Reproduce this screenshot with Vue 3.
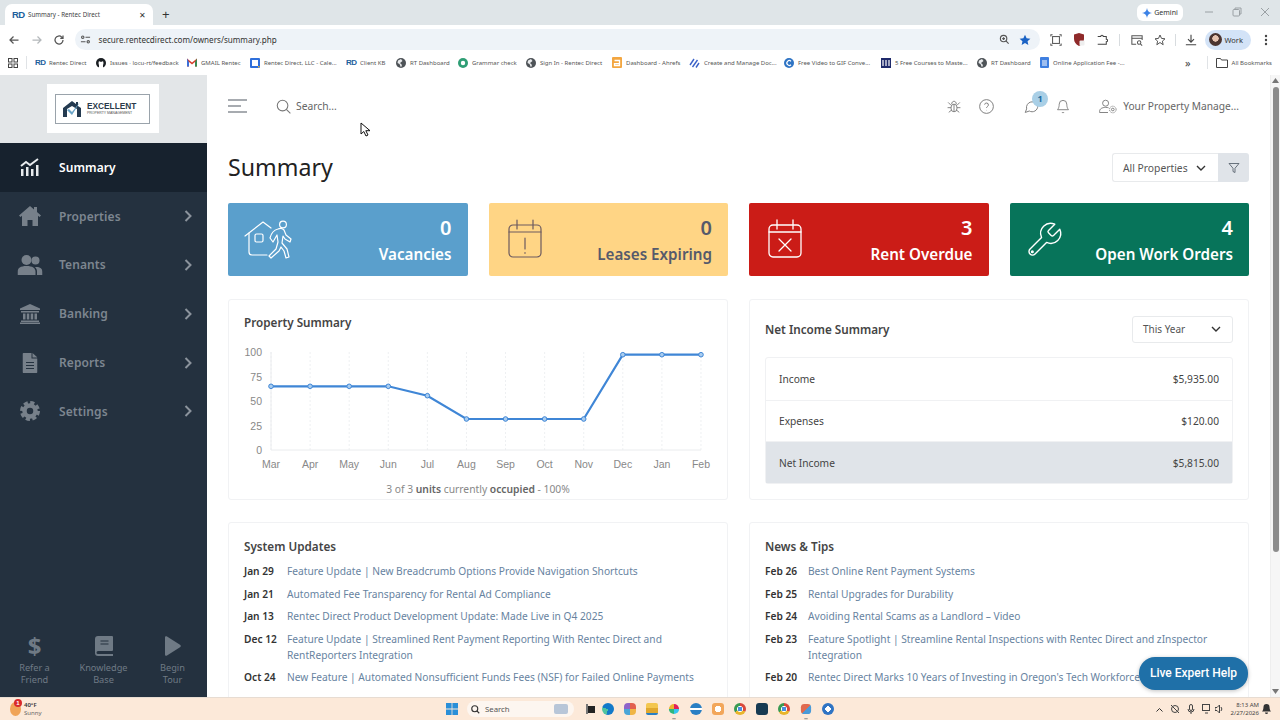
<script setup>
const bookmarks = [
  { t: 'Rentec Direct', w: 61, ic: 'rd' },
  { t: 'Issues · locu-rt/feedback', w: 91, ic: 'gh' },
  { t: 'GMAIL Rentec', w: 63, ic: 'gm' },
  { t: 'Rentec Direct, LLC - Cale...', w: 96, ic: 'cal' },
  { t: 'Client KB', w: 50, ic: 'rd' },
  { t: 'RT Dashboard', w: 62, ic: 'globe' },
  { t: 'Grammar check', w: 68, ic: 'gram' },
  { t: 'Sign In - Rentec Direct', w: 86, ic: 'globe' },
  { t: 'Dashboard - Ahrefs', w: 77, ic: 'ah' },
  { t: 'Create and Manage Doc...', w: 95, ic: 'cr' },
  { t: 'Free Video to GIF Conve...', w: 97, ic: 'gif' },
  { t: '5 Free Courses to Maste...', w: 96, ic: 'five' },
  { t: 'RT Dashboard', w: 63, ic: 'globe' },
  { t: 'Online Application Fee -...', w: 90, ic: 'doc' },
]

const nav = [
  { t: 'Properties', ic: 'home' },
  { t: 'Tenants', ic: 'users' },
  { t: 'Banking', ic: 'bank' },
  { t: 'Reports', ic: 'file' },
  { t: 'Settings', ic: 'cog' },
]

const months = ['Mar','Apr','May','Jun','Jul','Aug','Sep','Oct','Nov','Dec','Jan','Feb']
const vals = [42.3,42.3,42.3,42.3,51.7,75,75,75,75,10.7,10.7,10.7]
const pts = months.map((m, i) => ({ m, x: 27 + i * 39.09, y: vals[i] }))
const line = pts.map(p => p.x + ',' + p.y).join(' ')
const yLabels = [{ t: '100', y: 8 }, { t: '75', y: 32.5 }, { t: '50', y: 57 }, { t: '25', y: 81.5 }, { t: '0', y: 106 }]

const updates = [
  { d: 'Jan 29', t: 'Feature Update | New Breadcrumb Options Provide Navigation Shortcuts' },
  { d: 'Jan 21', t: 'Automated Fee Transparency for Rental Ad Compliance' },
  { d: 'Jan 13', t: 'Rentec Direct Product Development Update: Made Live in Q4 2025' },
  { d: 'Dec 12', t: 'Feature Update | Streamlined Rent Payment Reporting With Rentec Direct and RentReporters Integration' },
  { d: 'Oct 24', t: 'New Feature | Automated Nonsufficient Funds Fees (NSF) for Failed Online Payments' },
]
const news = [
  { d: 'Feb 26', t: 'Best Online Rent Payment Systems' },
  { d: 'Feb 25', t: 'Rental Upgrades for Durability' },
  { d: 'Feb 24', t: 'Avoiding Rental Scams as a Landlord – Video' },
  { d: 'Feb 23', t: 'Feature Spotlight | Streamline Rental Inspections with Rentec Direct and zInspector Integration' },
  { d: 'Feb 20', t: "Rentec Direct Marks 10 Years of Investing in Oregon's Tech Workforce" },
]
</script>

<template>
  <div class="screen">
    <!-- browser tabs -->
    <div class="tabstrip">
      <div class="tab">
        <span class="rd tabfav">RD</span>
        <span class="tabtitle">Summary - Rentec Direct</span>
        <span class="tabx">✕</span>
      </div>
      <span class="newtab">+</span>
      <div class="spacer"></div>
      <div class="gemini">
        <svg width="10" height="10" viewBox="0 0 10 10"><path d="M5 0C5.4 3 7 4.600 10 5 7 5.400 5.400 7 5 10 4.600 7 3 5.400 0 5 3 4.600 4.600 3 5 0Z" fill="#3c82e6"/></svg>
        <span>Gemini</span>
      </div>
      <div class="winctl">
        <svg width="10" height="10" viewBox="0 0 10 10" fill="none" stroke="#9aa0a4"><path d="M1 5h8"/></svg>
        <svg width="10" height="10" viewBox="0 0 10 10" fill="none" stroke="#9aa0a4"><rect x="1" y="2.500" width="6.500" height="6.500" rx="1"/><path d="M3 2.500V1h6v6H7.500"/></svg>
        <svg width="10" height="10" viewBox="0 0 10 10" fill="none" stroke="#9aa0a4"><path d="M1 1l8 8M9 1l-8 8"/></svg>
      </div>
    </div>

    <!-- address bar -->
    <div class="toolbar">
      <svg class="tb" width="12" height="12" viewBox="0 0 24 24" fill="none" stroke="#555" stroke-width="2.500"><path d="M21 12H4M11 5l-7 7 7 7"/></svg>
      <svg class="tb" width="12" height="12" viewBox="0 0 24 24" fill="none" stroke="#b4b8bb" stroke-width="2.500"><path d="M3 12h17M13 5l7 7-7 7"/></svg>
      <svg class="tb" width="12" height="12" viewBox="0 0 24 24" fill="none" stroke="#555" stroke-width="2.500"><path d="M20 12a8 8 0 1 1-2.500-5.800L20 8.500M20 3v5.500h-5.500"/></svg>
      <div class="omni">
        <svg width="11" height="11" viewBox="0 0 12 12" fill="none" stroke="#555" stroke-width="1.200"><circle cx="3" cy="3.500" r="1.300"/><path d="M6 3.500h5M1 8.500h5"/><circle cx="9" cy="8.500" r="1.300"/></svg>
        <span class="url">secure.rentecdirect.com/owners/summary.php</span>
        <div class="spacer"></div>
        <svg width="11" height="11" viewBox="0 0 24 24" fill="none" stroke="#555" stroke-width="2.500"><circle cx="10" cy="10" r="7"/><path d="M21 21l-6-6M7 10h6M10 7v6"/></svg>
        <svg width="12" height="12" viewBox="0 0 24 24" fill="#1a62c4"><path d="M12 1.500l3.200 7 7.600.800-5.700 5.100 1.600 7.500L12 18l-6.700 3.900 1.600-7.500L1.200 9.300l7.600-.8z"/></svg>
      </div>
      <div class="tbright">
        <svg width="12" height="12" viewBox="0 0 14 14" fill="none" stroke="#555" stroke-width="1.200"><path d="M1 3V1h2M11 1h2v2M13 11v2h-2M3 13H1v-2"/><rect x="3" y="3" width="8" height="8"/></svg>
        <svg width="12" height="13" viewBox="0 0 12 13"><path d="M1 1.500 6 0l5 1.500V6c0 3-2 5.500-5 7-3-1.500-5-4-5-7z" fill="#8f2a2a"/><rect x="6.500" y="7.500" width="5" height="5" rx="1" fill="#eee"/></svg>
        <svg width="12" height="12" viewBox="0 0 14 14" fill="none" stroke="#444" stroke-width="1.200"><path d="M2 3h3.500a1.500 1.500 0 0 1 3 0H12v3a1.500 1.500 0 0 1 0 3v3H2"/></svg>
        <i class="tdiv"></i>
        <svg width="12" height="12" viewBox="0 0 14 14" fill="none" stroke="#555" stroke-width="1.200"><path d="M6 12H1V2h12v5"/><path d="M1 5h12"/><circle cx="9.500" cy="10" r="2"/><path d="M11 11.500l2 2"/></svg>
        <svg width="12" height="12" viewBox="0 0 24 24" fill="none" stroke="#555" stroke-width="2"><path d="M12 2l3 6.800 7 .8-5.200 4.700 1.500 7.200L12 17l-6.300 4.500 1.500-7.200L2 9.600l7-.8z"/></svg>
        <i class="tdiv tight"></i>
        <svg width="12" height="12" viewBox="0 0 14 14" fill="none" stroke="#444" stroke-width="1.300"><path d="M7 1v8M3.500 6 7 9.500 10.500 6M1 12.500h12"/></svg>
        <div class="work">
          <span class="avatar"></span>
          <span>Work</span>
        </div>
        <svg width="4" height="12" viewBox="0 0 4 12" fill="#444"><circle cx="2" cy="2" r="1.200"/><circle cx="2" cy="6" r="1.200"/><circle cx="2" cy="10" r="1.200"/></svg>
      </div>
    </div>

    <!-- bookmarks -->
    <div class="bmbar">
      <svg class="apps" width="10" height="10" viewBox="0 0 10 10" fill="none" stroke="#444"><rect x=".5" y=".5" width="3.500" height="3.500"/><rect x="6" y=".5" width="3.500" height="3.500"/><rect x=".5" y="6" width="3.500" height="3.500"/><rect x="6" y="6" width="3.500" height="3.500"/></svg>
      <i class="bmdiv"></i>
      <div v-for="b in bookmarks" :key="b.t + b.w" class="bm" :style="{ width: b.w + 'px' }">
        <span v-if="b.ic === 'rd'" class="rd">RD</span>
        <svg v-else-if="b.ic === 'gh'" width="10" height="10" viewBox="0 0 10 10"><circle cx="5" cy="5" r="5" fill="#1b1f23"/><path d="M3 10V7.500L2.500 5 3 3l1 .7h2L7 3l.5 2L7 7.500V10z" fill="#fff"/></svg>
        <svg v-else-if="b.ic === 'gm'" width="10" height="9" viewBox="0 0 10 8"><path d="M0 8V0l5 4 5-4v8H8V3.500L5 6 2 3.500V8z" fill="#d6402f"/><path d="M8 8V3.500L10 0v8z" fill="#3a8a52"/><path d="M0 8V0l2 3.500V8z" fill="#3a6fd8"/></svg>
        <svg v-else-if="b.ic === 'cal'" width="10" height="10" viewBox="0 0 10 10"><rect width="10" height="10" rx="1" fill="#2f6fdb"/><rect x="2" y="2" width="6" height="6" fill="#fff"/><path d="M8 8h2l-2 2z" fill="#e9b52c"/></svg>
        <svg v-else-if="b.ic === 'globe'" width="10" height="10" viewBox="0 0 10 10"><circle cx="5" cy="5" r="5" fill="#4e5357"/><path d="M2 2.500 5 1l1.500 2L4 5l2 2-1 2.500L3.500 6 1.500 5z" fill="#e8eaec"/></svg>
        <svg v-else-if="b.ic === 'gram'" width="10" height="10" viewBox="0 0 10 10"><circle cx="5" cy="5" r="5" fill="#2f9e75"/><circle cx="5" cy="5" r="2.200" fill="#fff"/></svg>
        <svg v-else-if="b.ic === 'ah'" width="10" height="11" viewBox="0 0 10 11"><rect width="10" height="11" rx="1" fill="#f3a640"/><path d="M2.500 3.500h5v5h-5v-1.800h5" fill="none" stroke="#fff" stroke-width="1.300"/></svg>
        <svg v-else-if="b.ic === 'cr'" width="11" height="10" viewBox="0 0 11 10" fill="none" stroke="#3b62c9" stroke-width="1.400"><path d="M1 7 5 1M3.500 9 8.500 2M7 9.500 10 5"/></svg>
        <svg v-else-if="b.ic === 'gif'" width="10" height="10" viewBox="0 0 10 10"><circle cx="5" cy="5" r="5" fill="#2f74c4"/><path d="M7 3.300A2.400 2.400 0 1 0 7 6.700" fill="none" stroke="#fff" stroke-width="1.200"/></svg>
        <svg v-else-if="b.ic === 'five'" width="10" height="10" viewBox="0 0 10 10"><rect width="10" height="10" fill="#1f2a6b"/><path d="M2 2v6M5 2v6M8 2v6" stroke="#fff" stroke-width="1.200"/></svg>
        <svg v-else width="9" height="11" viewBox="0 0 9 11"><rect width="9" height="11" rx="1" fill="#3f7fe0"/><path d="M2 4h5M2 6h5M2 8h5" stroke="#fff"/></svg>
        <span class="bmtext">{{ b.t }}</span>
      </div>
      <div class="spacer"></div>
      <span class="more">»</span>
      <i class="bmdiv"></i>
      <svg width="12" height="10" viewBox="0 0 12 10" fill="none" stroke="#444"><path d="M.5 9.500V.5h4l1 1.500h6v7.500z"/></svg>
      <span class="bmtext allbm">All Bookmarks</span>
    </div>

    <!-- the page -->
    <div class="app">
      <aside class="side">
        <div class="logozone">
          <div class="logobox">
            <div class="logoframe">
              <svg width="21" height="17" viewBox="0 0 21 17"><path d="M0 8 9 1l4 3V2h2v4l3 2v9h-4V9L9 6 4 9v8H0z" fill="#243a50"/><path d="M6 9l3 3 8-10-8 13-5-5z" fill="#6aa5c8"/></svg>
              <div class="logotxt">
                <b>EXCELLENT</b>
                <span>PROPERTY MANAGEMENT</span>
              </div>
            </div>
          </div>
        </div>
        <div class="navitem active">
          <svg class="navic" width="20" height="20" viewBox="0 0 20 20"><path d="M1 9l5-4 4 3 8-6" fill="none" stroke="#e8ebee" stroke-width="2"/><path d="M1 12h2.500v7H1zM6 10h2.500v9H6zM11 12h2.500v7H11zM16 8h2.500v11H16z" fill="#e8ebee"/></svg>
          <span>Summary</span>
        </div>
        <div v-for="n in nav" :key="n.t" class="navitem">
          <svg v-if="n.ic === 'home'" class="navic" width="22" height="20" viewBox="0 0 22 20" fill="#77808a"><path d="M11 0 0 9.500l1.500 1.500L3 9.800V20h5.500v-6h5v6H19V9.800l1.500 1.200L22 9.500l-4-3.400V1h-3v2.500z"/></svg>
          <svg v-else-if="n.ic === 'users'" class="navic" width="25" height="20" viewBox="0 0 25 20" fill="#77808a"><circle cx="9" cy="5" r="5"/><circle cx="18" cy="5.500" r="4"/><path d="M0 20v-3c0-4 3-6 9-6s9 2 9 6v3z"/><path d="M19.500 20v-3.500c0-2-.8-3.500-2.300-4.500 5-.5 7.800 1.500 7.800 5v3z"/></svg>
          <svg v-else-if="n.ic === 'bank'" class="navic" width="20" height="20" viewBox="0 0 20 20" fill="#77808a"><path d="M10 0 0 4.500V6h20V4.500z"/><path d="M1 7h18v1.500H1zM3 9.500h2.500v6H3zM6.800 9.500h2.500v6H6.800zM10.700 9.500h2.500v6h-2.500zM14.500 9.500H17v6h-2.500zM1 16.500h18V18H1zM0 18.500h20V20H0z"/></svg>
          <svg v-else-if="n.ic === 'file'" class="navic" width="15" height="20" viewBox="0 0 15 20" fill="#77808a"><path d="M1 0h8v5.500h6V19a1 1 0 0 1-1 1H1a1 1 0 0 1-1-1V1a1 1 0 0 1 1-1zM10 0l5 4.500h-5z"/><path d="M3.500 9.500h8M3.500 12.500h8M3.500 15.500h8" stroke="#24313f" stroke-width="1"/></svg>
          <svg v-else class="navic" width="20" height="20" viewBox="0 0 20 20" fill="none" stroke="#77808a"><circle cx="10" cy="10" r="5.500" stroke-width="4.500"/><circle cx="10" cy="10" r="8.500" stroke-width="3" stroke-dasharray="4.200 2.470"/></svg>
          <span>{{ n.t }}</span>
          <svg class="navchev" width="8" height="12" viewBox="0 0 8 12" fill="none" stroke="#8b939c" stroke-width="2"><path d="M1.500 1l5 5-5 5"/></svg>
        </div>
        <div class="spacer"></div>
        <div class="sidefoot">
          <div class="footcell">
            <span class="dollar">$</span>
            <span>Refer a<br>Friend</span>
          </div>
          <div class="footcell">
            <svg width="18" height="20" viewBox="0 0 18 20" fill="#6f7a85"><path d="M3 0h14a1 1 0 0 1 1 1v13a1 1 0 0 1-1 1H3a1.500 1.500 0 0 0 0 3h15v2H3a3 3 0 0 1-3-3V3a3 3 0 0 1 3-3z"/><path d="M5.500 5h8M5.500 8h8" stroke="#24313f" stroke-width="1.200"/></svg>
            <span>Knowledge<br>Base</span>
          </div>
          <div class="footcell">
            <svg width="16" height="20" viewBox="0 0 16 20" fill="#6f7a85"><path d="M0 1.500C0 .3 1 0 2 .5l13 8.200c1 .6 1 2 0 2.600L2 19.500c-1 .5-2 .2-2-1z"/></svg>
            <span>Begin<br>Tour</span>
          </div>
        </div>
      </aside>

      <main class="main">
        <header class="head">
          <svg class="burger" width="19" height="14" viewBox="0 0 19 14" stroke="#8b9096" stroke-width="1.400"><path d="M0 1h19M0 7h13M0 13h19"/></svg>
          <svg class="mag" width="15" height="15" viewBox="0 0 24 24" fill="none" stroke="#777" stroke-width="1.700"><circle cx="10.500" cy="10.500" r="8.500"/><path d="m23 23-6.500-6.500"/></svg>
          <span class="searchtxt">Search...</span>
          <div class="spacer"></div>
          <svg class="hic bug" width="14" height="15" viewBox="0 0 24 24" fill="none" stroke="#777" stroke-width="1.500"><path d="M8 8c0-3 1.800-5 4-5s4 2 4 5"/><rect x="7" y="8" width="10" height="13" rx="5"/><path d="M12 8v13M2 5l5 5M22 5l-5 5M1 14h6M23 14h-6M3 22l5-4M21 22l-5-4"/></svg>
          <svg class="hic help" width="15" height="15" viewBox="0 0 24 24" fill="none" stroke="#777" stroke-width="1.500"><circle cx="12" cy="12" r="11"/><path d="M9 9a3 3 0 0 1 6 .8c0 2-3 2.500-3 4.500M12 17.500v.5"/></svg>
          <div class="bubble">
            <svg width="15" height="15" viewBox="0 0 24 24" fill="none" stroke="#777" stroke-width="1.500"><path d="M22 11.500a9 9 0 0 1-13.500 7.700L2 21.500l2.200-5.700A9 9 0 1 1 22 11.500z"/></svg>
            <span class="badge">1</span>
          </div>
          <svg class="hic bell" width="14" height="15" viewBox="0 0 24 24" fill="none" stroke="#777" stroke-width="1.500"><path d="M18.500 8a6.500 6.500 0 0 0-13 0c0 7-3 9.500-3 9.500h19s-3-2.500-3-9.500"/><path d="M14 21.500a2.300 2.300 0 0 1-4 0"/></svg>
          <svg class="hic usr" width="18" height="15" viewBox="0 0 30 24" fill="none" stroke="#777" stroke-width="1.500"><circle cx="11" cy="6.500" r="5"/><path d="M1 22v-2c0-4 4-6.500 10-6.500 2 0 3.500.2 5 .7M1 22h14"/><circle cx="23" cy="17" r="2.200"/><circle cx="23" cy="17" r="5.500" stroke-dasharray="2 1.500"/></svg>
          <span class="mgr">Your Property Manage...</span>
        </header>

        <div class="content">
          <div class="titlerow">
            <h1>Summary</h1>
            <div class="propsel">
              <div class="propbox">
                <span>All Properties</span>
                <svg width="10" height="10" viewBox="0 0 10 10" fill="none" stroke="#333" stroke-width="1.400"><path d="M1 3l4 4 4-4"/></svg>
              </div>
              <div class="filterbtn">
                <svg width="12" height="12" viewBox="0 0 24 24" fill="none" stroke="#5b6570" stroke-width="1.800"><path d="M22 3H2l8 9.500V19l4 2v-8.500z"/></svg>
              </div>
            </div>
          </div>

          <div class="cards">
            <div class="card blue">
              <svg class="cardic" width="48" height="40" viewBox="0 0 48 40" fill="none" stroke="#fff" stroke-width="1.200" stroke-linecap="round" stroke-linejoin="round">
                <path d="M1 16 19 2l8 6"/>
                <path d="M5 13v19a3 3 0 0 0 3 3h15"/>
                <rect x="11" y="14" width="8" height="8" rx="1.500"/>
                <circle cx="39" cy="4.500" r="3.400"/>
                <path d="M34 9C30 10 27 14 26 18L29 22 33 15 34 22 32 29 25 36 27 38 35 31 37 27 40 31 42 38 45 37 43 29 38 23 39 16 41 19 46 22 47 19 42 15 40 10C38 8 36 8 34 9Z"/>
              </svg>
              <div class="cardtxt"><b>0</b><span>Vacancies</span></div>
            </div>
            <div class="card yellow">
              <svg class="cardic cal" width="34" height="40" viewBox="0 0 34 40" fill="none" stroke="#6d5b60" stroke-width="1.200" stroke-linecap="round">
                <rect x="1" y="6" width="32" height="32" rx="4"/>
                <path d="M1 13h32M9 1v9M25 1v9M17 19v11M17 33.500v.8"/>
              </svg>
              <div class="cardtxt"><b>0</b><span>Leases Expiring</span></div>
            </div>
            <div class="card red">
              <svg class="cardic cal" width="34" height="40" viewBox="0 0 34 40" fill="none" stroke="#fff" stroke-width="1.300" stroke-linecap="round">
                <rect x="1" y="6" width="32" height="32" rx="4"/>
                <path d="M1 13h32M9 1v9M25 1v9M11 20l12 12M23 20 11 32"/>
              </svg>
              <div class="cardtxt"><b>3</b><span>Rent Overdue</span></div>
            </div>
            <div class="card green">
              <svg class="cardic wrench" width="40" height="40" viewBox="0 0 24 24" fill="none" stroke="#fff" stroke-width=".85" stroke-linejoin="round">
                <path d="M14.700 6.300a1 1 0 0 0 0 1.400l1.600 1.600a1 1 0 0 0 1.400 0l3.770-3.770a6 6 0 0 1-7.940 7.940l-6.910 6.910a2.120 2.120 0 0 1-3-3l6.910-6.910a6 6 0 0 1 7.940-7.940l-3.760 3.760z"/>
                <circle cx="5" cy="19" r=".5"/>
              </svg>
              <div class="cardtxt"><b>4</b><span>Open Work Orders</span></div>
            </div>
          </div>

          <div class="twocol first">
            <section class="panel chartp">
              <h2>Property Summary</h2>
              <svg class="chart" width="468" height="128" viewBox="0 0 468 128">
                <path v-for="p in pts" :key="p.m" :d="`M${p.x} 8V106`" stroke="#eef0f2" stroke-dasharray="2 2"/>
                <path d="M27 8V106H457" fill="none" stroke="#eaecee"/>
                <text v-for="l in yLabels" :key="l.t" x="18" :y="l.y + 4" text-anchor="end" class="axis">{{ l.t }}</text>
                <polyline :points="line" fill="none" stroke="#3f86d6" stroke-width="2.200"/>
                <circle v-for="p in pts" :key="p.m" :cx="p.x" :cy="p.y" r="2.300" fill="#a9cdf0" stroke="#3f86d6"/>
                <text v-for="p in pts" :key="p.m" :x="p.x" y="124" text-anchor="middle" class="axis">{{ p.m }}</text>
              </svg>
              <div class="occ">3 of 3 <b>units</b> currently <b>occupied</b> - 100%</div>
            </section>
            <section class="panel netp">
              <div class="nethead">
                <h2>Net Income Summary</h2>
                <div class="yearsel">
                  <span>This Year</span>
                  <svg width="10" height="10" viewBox="0 0 10 10" fill="none" stroke="#333" stroke-width="1.400"><path d="M1 3l4 4 4-4"/></svg>
                </div>
              </div>
              <div class="nettable">
                <div class="netrow"><span>Income</span><span>$5,935.00</span></div>
                <div class="netrow"><span>Expenses</span><span>$120.00</span></div>
                <div class="netrow total"><span>Net Income</span><span>$5,815.00</span></div>
              </div>
            </section>
          </div>

          <div class="twocol second">
            <section class="panel listp">
              <h2>System Updates</h2>
              <div v-for="u in updates" :key="u.d" class="lrow">
                <span class="ldate">{{ u.d }}</span>
                <a class="llink">{{ u.t }}</a>
              </div>
            </section>
            <section class="panel listp">
              <h2>News &amp; Tips</h2>
              <div v-for="u in news" :key="u.d" class="lrow">
                <span class="ldate">{{ u.d }}</span>
                <a class="llink">{{ u.t }}</a>
              </div>
            </section>
          </div>
        </div>
      </main>

      <div class="scrollbar">
        <svg width="7" height="5" viewBox="0 0 7 5" fill="#777"><path d="M3.500 0 7 5H0z"/></svg>
        <div class="thumb"></div>
        <div class="spacer"></div>
        <svg width="7" height="5" viewBox="0 0 7 5" fill="#777"><path d="M3.500 5 7 0H0z"/></svg>
      </div>

      <div class="livehelp">Live Expert Help</div>
      <svg class="cursor" width="11" height="15" viewBox="0 0 11 15"><path d="M1 1v11l2.800-2.500L6 14l2-1-2.200-4.300H10z" fill="#fff" stroke="#111" stroke-width="1"/></svg>
    </div>

    <!-- windows taskbar -->
    <div class="taskbar">
      <div class="weather">
        <span class="sun"><i>1</i></span>
        <div class="wtxt"><b>40°F</b><span>Sunny</span></div>
      </div>
      <div class="tcenter">
        <svg width="12" height="12" viewBox="0 0 12 12" fill="#2a8fd8"><path d="M0 0h5.600v5.600H0zM6.400 0H12v5.600H6.400zM0 6.400h5.600V12H0zM6.400 6.400H12V12H6.400z"/></svg>
        <div class="tsearch">
          <svg width="9" height="9" viewBox="0 0 24 24" fill="none" stroke="#333" stroke-width="3"><circle cx="10" cy="10" r="8"/><path d="m22 22-6-6"/></svg>
          <span>Search</span>
          <div class="spacer"></div>
          <i class="tspic"></i>
        </div>
        <div class="ticons">
          <svg class="tiwidget" width="12" height="12" viewBox="0 0 12 12"><path d="M3 3h7v7H3z" fill="#222"/><path d="M1 1h2v10H1z" fill="#777"/></svg>
          <span class="ti edge"></span>
          <span class="ti copilot"></span>
          <span class="ti folder on"></span>
          <span class="ti slack on"></span>
          <span class="ti swirl"></span>
          <span class="ti sq phone"></span>
          <span class="ti chrome"></span>
          <span class="ti sq dark on"></span>
          <span class="ti chrome on"></span>
          <span class="ti snip on"></span>
          <span class="ti cee on"></span>
        </div>
      </div>
      <div class="tray">
        <svg width="7" height="5" viewBox="0 0 7 5" fill="none" stroke="#333"><path d="M.5 4.500l3-3 3 3"/></svg>
        <svg width="10" height="10" viewBox="0 0 10 10" fill="none" stroke="#444"><circle cx="5" cy="5" r="3.500"/><path d="M1 1l8 8"/></svg>
        <svg width="8" height="10" viewBox="0 0 8 10" fill="none" stroke="#444"><rect x="2.500" y=".5" width="3" height="6" rx="1.500"/><path d="M1 5a3 3 0 0 0 6 0M4 8v2"/></svg>
        <svg width="10" height="10" viewBox="0 0 10 10" fill="none" stroke="#444"><rect x=".5" y=".5" width="7" height="6"/><path d="M3 9h3"/></svg>
        <svg class="vol" width="8" height="10" viewBox="0 0 8 10" fill="none" stroke="#444"><path d="M0 3.500h2L4.500 1v8L2 6.500H0zM6 3a3 3 0 0 1 0 4"/></svg>
        <div class="clock"><span>8:13 AM</span><span>2/27/2026</span></div>
        <svg class="tbell" width="9" height="11" viewBox="0 0 9 11" fill="#333"><path d="M4.500 0a3 3 0 0 1 3 3c0 3 1.500 4.500 1.500 4.500H0S1.500 6 1.500 3a3 3 0 0 1 3-3zM3 8.500h3a1.500 1.500 0 0 1-3 0z"/></svg>
      </div>
    </div>
  </div>
</template>

<style scoped>
.screen {
  width: 1280px;
  height: 720px;
  display: flex;
  flex-direction: column;
  overflow: hidden;
  font-family: "Noto Sans", "Open Sans", sans-serif;
  color: #333;
  background: #fff;
}
.spacer { flex: 1; }

/* chrome */
.tabstrip {
  height: 25px;
  background: #dfe5e8;
  display: flex;
  align-items: flex-end;
  padding-left: 5px;
  flex: none;
}
.tab {
  width: 148px;
  height: 21px;
  background: #fff;
  border-radius: 7px 7px 0 0;
  display: flex;
  align-items: center;
  padding-left: 7px;
  box-sizing: border-box;
}
.rd {
  font: 700 8px/10px "Liberation Sans", sans-serif;
  color: #1d5f9c;
  letter-spacing: -.5px;
  width: 10px;
  flex: none;
}
.tabfav { font-size: 9.500px; }
.tabtitle { font-size: 6.200px; color: #444; margin-left: 6px; flex: 1; }
.tabx { font-size: 8px; color: #333; margin-right: 7px; }
.newtab { font: 400 13px/21px "Liberation Sans", sans-serif; color: #333; margin-left: 9px; }
.gemini {
  height: 17px;
  width: 46px;
  align-self: flex-start;
  margin-top: 4px;
  background: #fff;
  border-radius: 6px;
  display: flex;
  align-items: center;
  justify-content: center;
  gap: 2px;
  font-size: 7px;
  color: #333;
}
.winctl {
  align-self: flex-start;
  margin-top: 7px;
  margin-left: 21px;
  margin-right: 10px;
  display: flex;
  gap: 18px;
}
.toolbar {
  height: 25px;
  background: #fff;
  display: flex;
  align-items: center;
  padding: 4px 0 0 8px;
  box-sizing: border-box;
  flex: none;
}
.tb { margin-right: 10.500px; }
.omni {
  width: 965px;
  height: 21px;
  background: #eef3f8;
  border-radius: 11px;
  display: flex;
  align-items: center;
  padding: 0 9px 0 5px;
  box-sizing: border-box;
  gap: 9px;
  margin-left: -1px;
  flex: none;
}
.url { font-size: 8.100px; color: #333; margin-left: -1px; }
.tbright { display: flex; align-items: center; gap: 11px; margin-left: 10px; }
.tdiv { width: 1px; height: 12px; background: #d8dcdf; }
.tight { margin: 0 -2px; }
.work {
  height: 20px;
  width: 46px;
  background: #d3e3f7;
  border-radius: 10px;
  display: flex;
  align-items: center;
  gap: 3px;
  font-size: 7.500px;
  padding-left: 4px;
  box-sizing: border-box;
  margin-left: -3px;
  margin-right: 2px;
}
.avatar {
  width: 13px;
  height: 13px;
  border-radius: 50%;
  background: radial-gradient(circle at 50% 42%, #e5c3b0 0 30%, #4a3430 34%);
}
.bmbar {
  height: 25px;
  background: #fff;
  display: flex;
  align-items: center;
  padding-left: 8px;
  box-sizing: border-box;
  flex: none;
}
.apps { flex: none; }
.bmdiv { width: 1px; height: 13px; background: #e0e3e6; margin: 0 8px; flex: none; }
.bm { display: flex; align-items: center; gap: 4px; flex: none; overflow: hidden; white-space: nowrap; }
.bmtext { font-size: 6px; color: #555; white-space: nowrap; }
.more { font-size: 11px; color: #444; margin-right: 8px; }
.allbm { margin: 0 8px 0 4px; }

/* app shell */
.app { flex: 1; display: flex; min-height: 0; position: relative; }
.side {
  width: 207px;
  flex: none;
  background: #24313f;
  display: flex;
  flex-direction: column;
}
.logozone {
  height: 68px;
  background: #e3e6e8;
  display: flex;
  justify-content: center;
  padding-top: 9px;
  box-sizing: border-box;
  padding-right: 2px;
}
.logobox {
  width: 112px;
  height: 49px;
  background: #fff;
  display: flex;
  align-items: center;
  justify-content: center;
}
.logoframe {
  width: 95px;
  height: 30px;
  border: 1px solid #9aa3ab;
  box-sizing: border-box;
  display: flex;
  align-items: center;
  gap: 3px;
  padding-left: 7px;
}
.logotxt { display: flex; flex-direction: column; line-height: 1; }
.logotxt b { font: 700 8.300px/10px "Liberation Sans", sans-serif; color: #2a3a4a; }
.logotxt span { font: 400 3.500px/5px "Liberation Sans", sans-serif; color: #555; }
.navitem {
  height: 48.800px;
  display: flex;
  align-items: center;
  position: relative;
  padding-left: 59px;
  box-sizing: border-box;
  font-size: 12px;
  font-weight: 600;
  letter-spacing: .1px;
  color: #7d8690;
  flex: none;
}
.navitem.active { background: #17222e; color: #fff; }
.navic { position: absolute; left: 29.500px; top: 50%; transform: translate(-50%, -50%); }
.navchev { position: absolute; left: 184px; top: 50%; margin-top: -6px; }
.sidefoot {
  display: flex;
  padding-bottom: 11px;
  justify-content: space-between;
}
.footcell {
  width: 69px;
  display: flex;
  flex-direction: column;
  align-items: center;
  text-align: center;
  font-size: 9.200px;
  line-height: 12px;
  color: #6f7a85;
  gap: 6px;
}
.dollar { font: 700 24px/20px "Noto Sans", sans-serif; color: #6f7a85; }

/* header */
.main { flex: 1; min-width: 0; overflow: hidden; background: #fff; }
.head {
  height: 62px;
  display: flex;
  align-items: center;
  padding: 0 31px 0 21px;
}
.mag { margin-left: 29px; }
.searchtxt { font-size: 10.300px; color: #666; margin-left: 5px; }
.hic { flex: none; }
.help { margin-left: 18px; }
.bubble { position: relative; margin-left: 30px; height: 15px; }
.bubble svg { display: block; }
.badge {
  position: absolute;
  left: 8px;
  top: -8px;
  width: 16px;
  height: 16px;
  border-radius: 50%;
  background: #a9cfe6;
  color: #1c6aa0;
  font-size: 9px;
  font-weight: 700;
  line-height: 16px;
  text-align: center;
}
.bell { margin-left: 17px; }
.usr { margin-left: 29px; }
.mgr { font-size: 10.200px; color: #666; margin-left: 6px; }

/* content */
.content { padding: 16px 21px 0; }
.titlerow { display: flex; align-items: center; justify-content: space-between; height: 29px; }
h1 { margin: 0 0 2px; font-size: 23.200px; font-weight: 400; color: #222; }
.propsel { display: flex; height: 29px; }
.propbox {
  width: 106px;
  border: 1px solid #e8eaec;
  border-right: 0;
  border-radius: 3px 0 0 3px;
  box-sizing: border-box;
  display: flex;
  align-items: center;
  justify-content: space-between;
  padding: 0 12px 0 10px;
  font-size: 10.300px;
  color: #555;
}
.filterbtn {
  width: 31px;
  background: #e0e4e9;
  border-radius: 0 3px 3px 0;
  display: flex;
  align-items: center;
  justify-content: center;
}
.cards {
  display: grid;
  grid-template-columns: repeat(4, 1fr);
  gap: 21px;
  margin-top: 21px;
}
.card {
  height: 73px;
  border-radius: 2px;
  display: flex;
  justify-content: space-between;
  padding: 0 16px;
  color: #fff;
  position: relative;
}
.blue { background: #5a9fcc; }
.yellow { background: #ffd585; color: #565a6b; }
.red { background: #cb1c17; }
.green { background: #07745a; }
.cardic { margin-top: 17px; }
.cal { margin-top: 16px; margin-left: 3px; }
.wrench { margin-left: -2px; }
.cardtxt { display: flex; flex-direction: column; align-items: flex-end; padding-top: 11px; }
.cardtxt b { font-size: 20px; font-weight: 600; line-height: 27px; }
.cardtxt span { font-size: 15.200px; font-weight: 600; line-height: 26px; }
.twocol { display: grid; grid-template-columns: 1fr 1fr; gap: 21px; }
.first { margin-top: 23px; }
.second { margin-top: 22px; }
.panel { border: 1px solid #f1f2f4; border-radius: 3px; box-sizing: border-box; }
h2 { margin: 0; font-size: 11.700px; font-weight: 600; color: #444; line-height: 17px; }
.chartp { height: 201px; padding: 14px 15px 0; }
.chart { display: block; margin-top: 13px; }
.axis { font: 400 10.500px "Liberation Sans", sans-serif; fill: #888; }
.occ { font-size: 10.300px; color: #888; text-align: center; margin-top: 10px; }
.occ b { font-weight: 600; color: #666; }
.netp { height: 201px; padding: 15px 15px 0 15px; }
.nethead { display: flex; align-items: center; justify-content: space-between; height: 28px; }
.yearsel {
  width: 101px;
  height: 27px;
  border: 1px solid #e8eaec;
  border-radius: 3px;
  box-sizing: border-box;
  display: flex;
  align-items: center;
  justify-content: space-between;
  padding: 0 11px 0 10px;
  font-size: 10px;
  color: #555;
}
.nettable { margin-top: 14px; border: 1px solid #f0f1f3; border-radius: 3px; }
.netrow {
  height: 41.700px;
  display: flex;
  align-items: center;
  justify-content: space-between;
  padding: 0 13px;
  font-size: 10.200px;
  color: #444;
  box-sizing: border-box;
}
.netrow + .netrow { border-top: 1px solid #f0f1f3; }
.total { background: #e0e4e9; }
.listp { padding: 15px 15px 0; height: 300px; }
.listp h2 { margin-bottom: 8px; }
.lrow { display: flex; font-size: 10.200px; line-height: 16px; margin-bottom: 6.600px; }
.ldate { width: 43px; flex: none; color: #333; font-weight: 600; }
.llink { color: #67839f; }

/* scrollbar + overlays */
.scrollbar {
  width: 10px;
  flex: none;
  background: #f6f6f6;
  border-left: 1px solid #eee;
  box-sizing: border-box;
  display: flex;
  flex-direction: column;
  align-items: center;
  padding: 3px 0;
}
.thumb { width: 6px; height: 465px; background: #8c8c8c; border-radius: 3px; margin-top: 4px; }
.livehelp {
  position: absolute;
  left: 1139px;
  top: 582px;
  width: 109px;
  height: 33px;
  background: #1f70a8;
  border-radius: 16px;
  color: #fff;
  font: 500 12px/33px Roboto, sans-serif;
  text-align: center;
  box-shadow: 0 1px 4px rgba(0,0,0,.25);
}
.cursor { position: absolute; left: 360px; top: 47px; }

/* taskbar */
.taskbar {
  height: 23px;
  background: #fce9d9;
  border-top: 1px solid #e7dcd2;
  box-sizing: border-box;
  display: flex;
  align-items: center;
  position: relative;
  flex: none;
}
.weather { display: flex; align-items: center; gap: 3px; margin-left: 10px; }
.sun {
  width: 11px;
  height: 14px;
  border-radius: 50%;
  background: #f0a458;
  position: relative;
}
.sun i {
  position: absolute;
  left: 4px;
  top: -3px;
  width: 8px;
  height: 8px;
  border-radius: 50%;
  background: #d92b2b;
  color: #fff;
  font: 700 6px/8px "Liberation Sans", sans-serif;
  text-align: center;
}
.wtxt { display: flex; flex-direction: column; font-size: 6px; line-height: 8px; color: #666; }
.wtxt b { font-weight: 600; color: #333; }
.tcenter { position: absolute; left: 446px; top: 3px; display: flex; align-items: center; gap: 9px; }
.tsearch {
  width: 107px;
  height: 16px;
  background: #fdf6f0;
  border-radius: 8px;
  display: flex;
  align-items: center;
  gap: 5px;
  padding: 0 6px 0 4px;
  box-sizing: border-box;
  font-size: 7.800px;
  color: #555;
}
.tspic { width: 14px; height: 10px; background: #b8c6d8; border-radius: 2px; }
.ticons { display: flex; align-items: center; gap: 10px; margin-left: 2px; }
.tiwidget { margin-right: -5px; }
.ti { width: 12px; height: 12px; border-radius: 50%; position: relative; flex: none; }
.sq { border-radius: 3px; }
.on::after {
  content: "";
  position: absolute;
  left: 4px;
  bottom: -6px;
  width: 4px;
  height: 1px;
  background: #777;
}
.edge { background: conic-gradient(#1379c9 0 55%, #4fc3a1 55% 80%, #1379c9 80%); }
.copilot { background: conic-gradient(#e2604f 0 25%, #f0b545 25% 50%, #4aa5d8 50% 75%, #8f63c9 75%); border-radius: 4px; }
.folder { background: linear-gradient(#f3c64f 0 45%, #e0a72e 45% 80%, #2a7fc4 80%); border-radius: 2px; }
.slack { background: conic-gradient(#e01e5a 0 25%, #36c5f0 25% 50%, #2eb67d 50% 75%, #ecb22e 75%); transform: scale(.85); }
.swirl { background: linear-gradient(#2a7fc4 0 40%, #fff 40% 55%, #2a7fc4 55%); }
.phone { background: radial-gradient(circle, #fff 0 35%, #f2a65a 40%); }
.chrome { background: radial-gradient(circle, #4a8fe0 0 25%, #fff 26% 34%, transparent 35%), conic-gradient(#d9483b 0 33%, #e9b52c 33% 66%, #3a9a52 66%); }
.dark { background: #173a52; }
.snip { background: linear-gradient(135deg, #e06a4f 0 50%, #4a9ad8 50%); border-radius: 4px; transform: scale(.85); }
.cee { background: radial-gradient(circle, #fff 0 30%, #2f74c4 34%); }
.tray { margin-left: auto; display: flex; align-items: center; gap: 7px; padding-right: 9px; }
.vol { margin-left: -4px; }
.clock {
  display: flex;
  flex-direction: column;
  align-items: flex-end;
  font-size: 6px;
  line-height: 8px;
  color: #444;
  margin-left: 1px;
}
.tbell { margin-left: -4px; }
</style>

<style>
html, body { margin: 0; padding: 0; overflow: hidden; }
</style>
